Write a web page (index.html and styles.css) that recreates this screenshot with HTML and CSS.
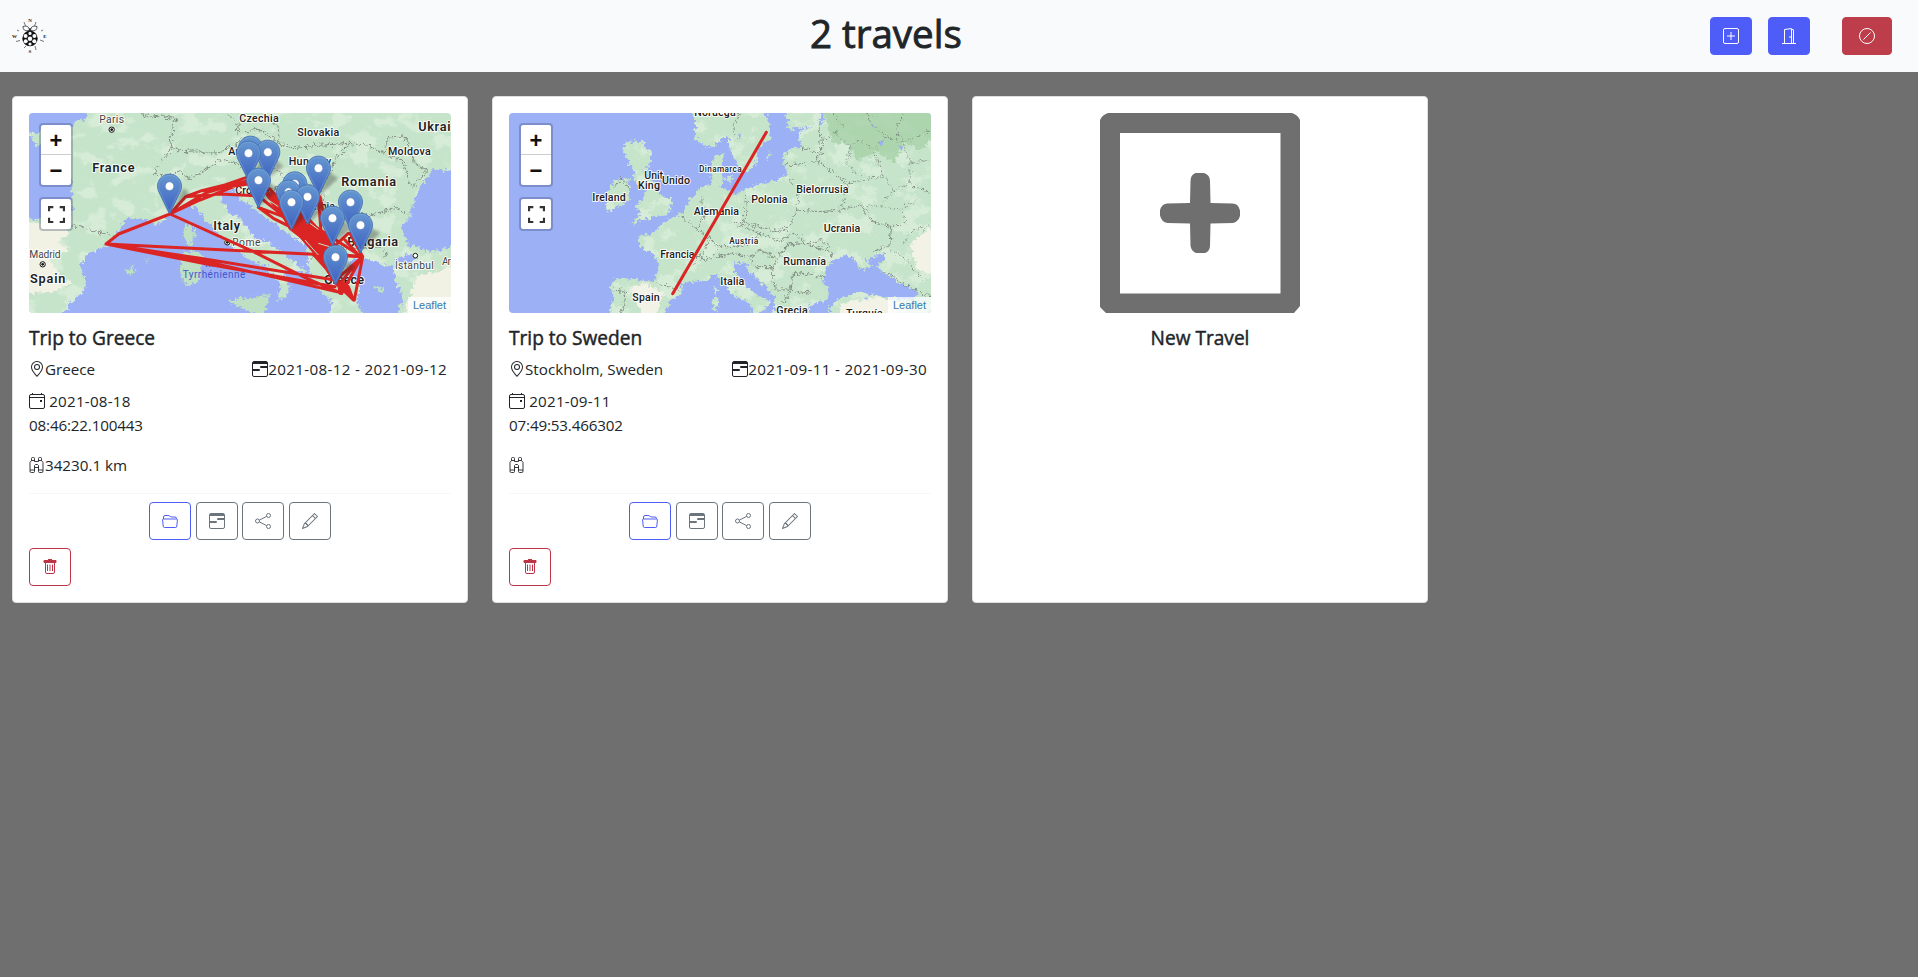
FILE: index.html
```html
<!DOCTYPE html>
<html lang="en">
<head>
<meta charset="utf-8">
<title>Travels</title>
<link rel="stylesheet" href="styles.css">
</head>
<body>
<svg class="defs" width="0" height="0" aria-hidden="true">
  <defs>
    <linearGradient id="pinFill" x1="0" y1="0" x2="0" y2="1"><stop offset="0" stop-color="#6597d0"/><stop offset="1" stop-color="#3c5fc0"/></linearGradient>
    <filter id="coast" x="-5%" y="-5%" width="110%" height="110%"><feTurbulence type="fractalNoise" baseFrequency="0.09" numOctaves="3" seed="4"/><feDisplacementMap in="SourceGraphic" scale="26" xChannelSelector="R" yChannelSelector="G"/></filter>
    <filter id="wood" x="0" y="0" width="100%" height="100%"><feTurbulence type="fractalNoise" baseFrequency="0.015 0.02" numOctaves="5" seed="11"/><feColorMatrix values="0 0 0 0 .67  0 0 0 0 .84  0 0 0 0 .68  9 0 0 0 -4.7"/><feComposite in2="SourceGraphic" operator="in"/></filter>
    <filter id="soft"><feGaussianBlur stdDeviation="5"/></filter>
    <symbol id="pin" viewBox="0 0 25 41" overflow="visible"><path d="M12.500.5C5.600.5.5 5.800.5 12.500c0 3.200 1.400 6 3 9.200L12.500 40.300l9-18.600c1.600-3.200 3-6 3-9.200C24.500 5.800 19.400.5 12.500.5z" fill="url(#pinFill)" stroke="#4674b2" stroke-width=".9"/><path d="M12.500 1.600C6.600 1.600 1.600 6.200 1.600 12.500c0 2.900 1.300 5.600 2.900 8.800l8 16.500 8-16.500c1.600-3.200 2.900-5.900 2.900-8.800 0-6.300-5-10.900-10.900-10.900z" fill="none" stroke="#8fb5e0" stroke-opacity=".4" stroke-width=".9"/><circle cx="12.500" cy="12.500" r="4.300" fill="#fff" stroke="#3a66b0" stroke-width=".5"/></symbol>
    <symbol id="geo" viewBox="0 0 16 16"><path d="M12.166 8.940c-.524 1.062-1.234 2.120-1.960 3.070A31.493 31.493 0 0 1 8 14.580a31.481 31.481 0 0 1-2.206-2.570c-.726-.950-1.436-2.008-1.960-3.070C3.304 7.867 3 6.862 3 6a5 5 0 0 1 10 0c0 .862-.305 1.867-.834 2.940zM8 16s6-5.686 6-10A6 6 0 0 0 2 6c0 4.314 6 10 6 10z"/><path d="M8 8a2 2 0 1 1 0-4 2 2 0 0 1 0 4zm0 1a3 3 0 1 0 0-6 3 3 0 0 0 0 6z"/></symbol>
    <symbol id="range" viewBox="0 0 16 16"><path fill="none" stroke="currentColor" d="M2 .5h12A1.500 1.500 0 0 1 15.500 2v12a1.500 1.500 0 0 1-1.500 1.500H2A1.500 1.500 0 0 1 .5 14V2A1.500 1.500 0 0 1 2 .5z"/><path d="M1 1h14v2H1zM15 5v2H9a1 1 0 0 1 0-2zM1 8h6a1 1 0 0 1 0 2H1z"/></symbol>
    <symbol id="event" viewBox="0 0 16 16"><path fill="none" stroke="currentColor" d="M2 1.500h12A1.500 1.500 0 0 1 15.500 3v11a1.500 1.500 0 0 1-1.500 1.500H2A1.500 1.500 0 0 1 .5 14V3A1.500 1.500 0 0 1 2 1.500zM.5 4.500h15M3.500 0v2M12.500 0v2"/><path d="M11 7h2v2h-2z"/></symbol>
    <symbol id="binoculars" viewBox="0 0 16 16"><path fill="none" stroke="currentColor" stroke-width=".9" d="M2.500 3.500v-2a1 1 0 0 1 1-1h1a1 1 0 0 1 1 1v3h4v-3a1 1 0 0 1 1-1h1a1 1 0 0 1 1 1v2M2.500 3.500h3M9.500 3.500h3M2.500 3.500L1 5.500v8.500a1.300 1.300 0 0 0 1.300 1.500h2.200a1 1 0 0 0 1-1V10M9.500 10v4.500a1 1 0 0 0 1 1h2.200A1.300 1.300 0 0 0 14 14V5.500L12.500 3.500M1 13h4.500M9.500 13H14M5.500 10.500V8.500L6.500 7.500h2l1 1v2M5.500 10.500h4"/></symbol>
    <symbol id="folder" viewBox="0 0 16 16"><path fill="none" stroke="currentColor" d="M1.500 6V4a1.500 1.500 0 0 1 1.500-1.500h3c1.800 0 2 1.500 4 1.500h3a1.500 1.500 0 0 1 1.500 1.500V6M1.500 6h13a.9.9 0 0 1 .9 1l-.6 6a1.500 1.500 0 0 1-1.500 1.500H2.700A1.500 1.500 0 0 1 1.200 13L.6 7a.9.9 0 0 1 .9-1z"/></symbol>
    <symbol id="share" viewBox="0 0 16 16"><g fill="none" stroke="currentColor"><circle cx="13.500" cy="2.500" r="2"/><circle cx="2.500" cy="8" r="2"/><circle cx="13.500" cy="13.500" r="2"/><path d="M4.300 7.100l7.400-3.700M4.300 8.900l7.400 3.700"/></g></symbol>
    <symbol id="pencil" viewBox="0 0 16 16"><path d="M12.146.146a.5.5 0 0 1 .708 0l3 3a.5.5 0 0 1 0 .708l-10 10a.5.5 0 0 1-.168.110l-5 2a.5.5 0 0 1-.650-.650l2-5a.5.5 0 0 1 .110-.168l10-10zM11.207 2.500 13.500 4.793 14.793 3.500 12.500 1.207 11.207 2.500zm1.586 3L10.500 3.207 4 9.707V10h.5a.5.5 0 0 1 .5.500v.5h.5a.5.5 0 0 1 .5.500v.5h.293l6.500-6.500zm-9.761 5.175-.106.106-1.528 3.821 3.821-1.528.106-.106A.5.5 0 0 1 5 12.500V12h-.5a.5.5 0 0 1-.5-.500V11h-.5a.5.5 0 0 1-.468-.325z"/></symbol>
    <symbol id="trash" viewBox="0 0 16 16"><path d="M6 0h4v1h3.500a1 1 0 0 1 1 1v1a1 1 0 0 1-1 1h-11a1 1 0 0 1-1-1V2a1 1 0 0 1 1-1H6z"/><path fill="none" stroke="currentColor" d="M3.500 4v9A1.500 1.500 0 0 0 5 14.500h6a1.500 1.500 0 0 0 1.500-1.500V4M5.500 5.500V12M8 5.500V12M10.500 5.500V12"/></symbol>
  </defs>
</svg>

<header class="navbar">
  <svg class="logo" viewBox="0 0 36 36" aria-label="Compass">
    <circle cx="18" cy="20.500" r="7.700" fill="#111"/><path d="M15 13l3-3 3 3z" fill="#111"/>
    <g fill="#f8fafc"><circle cx="18" cy="20.800" r="2.200"/><circle cx="18" cy="15.400" r="1.600"/><circle cx="18" cy="26" r="1.600"/><circle cx="13.600" cy="18" r="2"/><circle cx="22.400" cy="18" r="2"/><circle cx="13.700" cy="23.200" r="2"/><circle cx="22.300" cy="23.200" r="2"/></g>
    <path d="M17.500 12.500c-5 1-6.500-1-6.500-4 4-1 6 0 6.500 4zM18.500 12.500c5 1 6.500-1 6.500-4-4-1-6 0-6.500 4z" fill="#f8fafc" stroke="#222" stroke-width=".8"/>
    <g stroke="#555" stroke-width=".8"><path d="M12 4l1.500 4M24 4l-1.500 4M5 12l2 1M29 13l2-1M4 23.500l4-1M28 22l4 1.500M12 30l2-2M23 28l1 4"/></g>
    <g class="logo-text"><text x="18" y="4">N</text><text x="18" y="35">S</text><text x="2.500" y="19.500">W</text><text x="33" y="19.500">E</text></g>
  </svg>
  <h1 class="page-title">2 travels</h1>
  <nav class="actions">
    <button class="btn primary" aria-label="New travel"><svg class="icon" viewBox="0 0 16 16"><g fill="none" stroke="currentColor"><rect x=".5" y=".5" width="15" height="15" rx="1.500"/><path d="M8 4v8M4 8h8"/></g></svg></button>
    <button class="btn primary" aria-label="Log out"><svg class="icon" viewBox="0 0 16 16"><path fill="none" stroke="currentColor" d="M1 15.500h14M3.500 15.500V1.500L10.500.6v14.900M10.500 1.500h1.500a.5.500 0 0 1 .5.500v13.500"/><path d="M8.500 8h1v2h-1z"/></svg></button>
    <button class="btn danger wide" aria-label="Delete account"><svg class="icon" viewBox="0 0 16 16"><g fill="none" stroke="currentColor"><circle cx="8" cy="8" r="7.500"/><path d="M4.500 11.500l7-7"/></g></svg></button>
  </nav>
</header>

<main class="cards">
  <article class="card">
    <div class="map">
      <svg class="tiles" viewBox="27 39 1266 600" width="422" height="200">
        <rect x="27" y="39" width="1266" height="600" fill="#c6e4c9"/>
        <rect x="27" y="39" width="1266" height="600" filter="url(#wood)"/>
        <path filter="url(#coast)" fill="#f1f1e4" d="M20 365L130 380 150 400 110 430 150 450 90 480 120 530 160 550 100 575 20 580zM1190 530L1300 500V650H1150z"/>
        <g filter="url(#coast)" fill="#9cb0f6">
          <path d="M10 20H215L190 62 165 58 160 85 75 75 65 100 30 98 40 130 75 140 130 170 155 240 155 345 110 360 10 355z"/>
          <path d="M290 405L320 355 375 360 410 375 455 340 490 315 530 320 550 355 590 400 630 435 690 480 740 500 760 530 785 555 770 600 800 590 810 560 790 525 800 500 840 520 860 515 810 475 750 430 700 410 665 360 630 340 605 305 608 275 650 268 660 300 700 325 750 360 800 400 860 435 870 520 900 570 935 600 930 660H120L150 610 200 560 180 500 200 465 255 440z"/>
          <path d="M1000 475L1060 480 1090 495 1120 500 1125 540 1150 590 1130 660H1040L1010 610 1020 560 990 530 985 495z"/>
          <path d="M1145 380L1170 350 1180 310 1200 260 1240 205 1300 215V440L1230 455 1160 430z"/><path d="M1120 480L1160 462 1190 475 1170 495z"/>
        </g>
        <g filter="url(#coast)" fill="#bfe0c2"><path d="M512 360L525 400 510 440 490 415 495 385zM482 465L520 450 550 470 535 545 500 560 485 535zM625 602L700 590 750 585 730 645H700zM315 510L340 500 345 515 330 525zM370 480L385 478 380 488zM1060 560L1090 560 1085 580z"/></g>
        <g class="border"><path d="M130 375L180 380 220 393 282 408M360 40L385 47 465 55 450 115 457 145 490 155 530 152 560 160 600 158 650 130 700 85 735 95 775 130 815 143 880 137 985 130 1040 135 1090 160 1110 110 1150 110 1175 150 1180 190 1222 210 1175 265 1160 225 1150 185 1090 160M457 145L430 175 400 220 440 228 480 215 500 240 540 220 600 180 640 185 660 200M735 40L770 75 780 110M620 40L655 75 650 110M780 110L765 160 760 200 800 240 870 250 905 265 910 300 960 330 1050 345 1130 325 1165 345M985 130L950 175 905 265M660 240L720 255 760 265 830 270M760 265L755 310 800 345 850 380M870 400L910 390 940 430 1000 445 1090 440 1100 470M870 480L900 440"/></g>
        <g class="map-label">
          <text x="275" y="68" textLength="74" class="city">Paris</text><text x="717" y="66" textLength="118">Czechia</text><text x="895" y="107" textLength="126">Slovakia</text><text x="1243" y="93" textLength="97" class="big">Ukrai</text><text x="1168" y="164" textLength="128">Moldova</text><text x="280" y="216" textLength="127" class="big">France</text><text x="625" y="165" class="start">Austria</text><text x="870" y="194" textLength="128">Hungary</text><text x="1046" y="258" textLength="165" class="big">Romania</text><text x="646" y="283" class="start">Croatia</text><text x="620" y="390" textLength="80" class="big">Italy</text><text x="679" y="437" textLength="85" class="city">Rome</text><text x="900" y="330" textLength="90">Serbia</text><text x="1058" y="438" textLength="153" class="big">Bulgaria</text><text x="75" y="475" textLength="94" class="city">Madrid</text><text x="83" y="548" textLength="106" class="big">Spain</text><text x="1183" y="506" textLength="116" class="city">İstanbul</text><text x="1266" y="496" textLength="27" class="city start">Ar</text><text x="972" y="551" textLength="120" class="big">Greece</text>
        </g>
        <g class="sea-label"><text x="582" y="502">Mer</text><text x="582" y="535" textLength="188">Tyrrhénienne</text></g>
        <g fill="#fff" stroke="#111" stroke-width="3"><circle cx="275" cy="89" r="8"/><circle cx="68" cy="493" r="8"/><circle cx="622" cy="427" r="8"/><circle cx="1186" cy="467" r="7"/></g><g fill="#111"><circle cx="275" cy="89" r="4"/><circle cx="68" cy="493" r="4"/><circle cx="622" cy="427" r="4"/></g>
        <g class="track">
          <path d="M258 432L296 402 450 342 497 290 545 272 615 255 680 232M450 342L540 300 680 245M450 342L560 278 690 240M497 290L600 282 720 288M545 272L700 250M450 342L700 455 860 535 965 580M258 432L880 463 1028 470M258 432L540 475 945 540M258 432L560 492 945 560M258 432L560 485 965 578"/>
          <path d="M690 240L745 265 820 330 900 390 940 430M715 322L790 350 830 390 905 480 947 550M715 322L760 355 820 385 870 440 920 490M750 268L790 310 850 340 915 410 940 450M740 280L850 370 930 470M760 290L810 385 900 455M730 300L850 395 940 540M895 290L905 420 880 463M900 290L912 350 940 430M870 370L1025 470M940 430L960 580M985 400L920 460 1028 470 1003 600 960 550 1025 470 965 580 945 530 1003 600M1028 470L1003 600 947 550M880 463L1003 600M1020 470L975 420M990 400L1028 470 947 540"/>
          <path d="M735 275L780 340 830 395 890 465 925 500 940 470 940 430 860 365 790 295zM965 545L985 560 1000 600 975 575z" fill="#db2424"/>
        </g>
        <g class="label-gap"><path d="M745 300l30 20M855 420l40 45M870 370l25 18M895 430l40 12"/></g>
        <g fill="#222" opacity=".32" filter="url(#soft)"><path d="M450 342L510 280 490 265zM687 240L755 180 730 165zM743 235L790 200 770 180zM715 322L775 270 745 245zM895 290L955 235 925 215zM862 373L925 315 890 300zM814 388L875 335 845 315zM937 436L1000 380 965 360zM1021 457L1080 400 1050 380zM946 553L1008 500 975 480z"/></g>
        <g><use href="#pin" x="654" y="107" width="75" height="123"/><use href="#pin" x="706" y="119" width="75" height="123"/><use href="#pin" x="648" y="122" width="75" height="123"/><use href="#pin" x="858" y="167" width="75" height="123"/><use href="#pin" x="678" y="203" width="75" height="123"/><use href="#pin" x="787" y="214" width="75" height="123"/><use href="#pin" x="411" y="221" width="75" height="123"/><use href="#pin" x="768" y="239" width="75" height="123"/><use href="#pin" x="825" y="253" width="75" height="123"/><use href="#pin" x="777" y="269" width="75" height="123"/><use href="#pin" x="954" y="269" width="75" height="123"/><use href="#pin" x="900" y="317" width="75" height="123"/><use href="#pin" x="984" y="338" width="75" height="123"/><use href="#pin" x="909" y="434" width="75" height="123"/></g>
      </svg>
      <div class="controls"><div class="control"><span>+</span><span>−</span></div><div class="control"><svg class="full" viewBox="0 0 16 16"><path d="M1 5V1h4M11 1h4v4M15 11v4h-4M5 15H1v-4"/></svg></div></div>
      <a class="credit">Leaflet</a>
    </div>
    <h2 class="card-title">Trip to Greece</h2>
    <div class="facts"><span class="fact"><svg class="icon"><use href="#geo"/></svg>Greece</span><span class="fact dates"><svg class="icon"><use href="#range"/></svg>2021-08-12 - 2021-09-12</span></div>
    <p class="created"><svg class="icon"><use href="#event"/></svg> 2021-08-18<br><span class="time">08:46:22.100443</span></p>
    <p class="fact distance"><svg class="icon"><use href="#binoculars"/></svg>34230.1 km</p>
    <hr class="rule">
    <div class="tools"><button class="btn outline-primary" aria-label="Open"><svg class="icon"><use href="#folder"/></svg></button><button class="btn outline" aria-label="Dates"><svg class="icon"><use href="#range"/></svg></button><button class="btn outline" aria-label="Share"><svg class="icon"><use href="#share"/></svg></button><button class="btn outline" aria-label="Edit"><svg class="icon"><use href="#pencil"/></svg></button></div>
    <button class="btn outline-danger" aria-label="Delete"><svg class="icon"><use href="#trash"/></svg></button>
  </article>

  <article class="card">
    <div class="map">
      <svg class="tiles" viewBox="27 39 1266 600" width="422" height="200">
        <defs><path id="europe" d="M1310 20H965L975 50 960 75 900 92 893 115 910 140 870 145 850 165 858 225 830 240 800 245 740 265 705 285 690 270 660 262 672 240 665 215 672 160 650 165 634 190 635 250 600 265 572 295 545 340 500 360 465 395 410 410 420 440 465 465 475 500 465 545 345 535 332 560 340 590 325 660H480L510 605 545 575 545 550 575 545 605 545 645 525 665 545 700 585 750 610 765 660 800 620 810 605 760 580 705 515 705 490 737 488 745 510 790 555 825 590 820 660H930L925 615 980 600 985 570 965 545 990 490 1030 465 1065 475 1080 510 1120 500 1095 480 1150 458 1155 475 1130 500 1190 545 1255 575 1240 600 1150 590 1080 575 1010 600 990 620 990 660H1310zM570 20L585 60 585 115 620 145 650 130 685 105 690 150 710 190 735 220 765 195 775 145 812 115 805 60 785 20zM860 50L870 90 955 78 965 20H850zM370 150L375 125 440 125 430 150 457 155 445 200 430 215 460 240 480 285 517 300 505 345 440 355 393 373 425 335 405 325 425 300 440 270 405 245 400 215zM345 240L385 232 388 300 330 335 315 325 330 260zM640 562L652 562 648 590zM637 595L655 595 650 635 637 630zM800 175L810 155 812 170zM675 230L700 225 690 255z"/></defs>
        <rect x="27" y="39" width="1266" height="600" fill="#9cb0f6"/>
        <g filter="url(#coast)"><use href="#europe" fill="#c6e4c9"/><use href="#europe" filter="url(#wood)"/></g>
        <path filter="url(#coast)" fill="#a5d1a8" opacity=".8" d="M970 20H1310V100L1260 150 1210 130 1180 190 1130 155 1070 180 1040 130 1000 130 985 90z"/>
        <path filter="url(#coast)" fill="#f2f2e6" d="M385 570L430 550 490 575 470 645H430L410 610zM1230 430L1310 370V520L1250 510zM1020 610L1140 590 1230 620 1180 655H1020z"/>
        <g fill="#9cb0f6"><path d="M1135 128l18-10-8 22zM1195 135l14 5-4 14zM715 105l8-5-3 20zM1115 70l12 15-14-8zM1062 520l15-8 10 12zM1090 595l10-3 2 8z"/></g>
        <g class="border"><path d="M720 39L700 80 710 110M850 195L900 192 950 185 965 150 960 85M905 145L960 160M865 235L895 270 890 330 870 380 840 395 780 380 735 370 740 280M950 185L1000 215 1045 250 1025 330 960 335 890 330M1025 330L1080 315 1120 365 1175 380 1170 435 1120 455M605 290L610 350 590 390 545 350M590 390L630 410 615 450 580 490M630 410L650 440 700 440 750 430 780 400 700 370 735 370M780 400L840 425 880 400 920 430 970 420 1000 470M470 550L540 570M340 570L380 575 365 639M600 480L650 470 700 460 750 470 780 450 830 475 860 435 920 430M750 470L760 500 820 500 815 540 830 570M860 435L840 470 820 500M880 520L975 530M880 520L870 570 930 580M830 570L870 570 850 610M920 430L975 450 1000 470M345 260l20-25 15 20M1150 510L1220 560 1293 590"/><path stroke-dasharray="7 6" d="M970 120L1010 100 1050 140 1080 120 1120 150 1160 110 1210 130 1290 90M1000 39L1030 80 1000 100M1100 39L1120 80 1160 110M1210 39L1190 90 1210 130M1050 140L1040 190 1090 240 1045 250M1090 240L1150 230 1180 270 1140 320 1080 315M1180 270L1230 250 1290 280M1120 150L1140 200 1150 230M1210 130L1230 190 1230 250M1230 190L1290 180M1140 320L1200 330 1250 300M1175 380L1220 370 1200 330M1210 430L1240 390 1290 380M1170 450L1220 480 1270 540"/></g>
        <g class="map-label light">
          <text x="645" y="49" textLength="124">Noruega</text><text x="661" y="216" textLength="128" class="small">Dinamarca</text><text x="461" y="236" textLength="56">Unit</text><text x="447" y="266" textLength="66">King</text><text x="528" y="251" textLength="84">Unido</text><text x="327" y="303" textLength="100">Ireland</text><text x="649" y="344" textLength="136">Alemania</text><text x="808" y="308" textLength="109">Polonia</text><text x="967" y="278" textLength="157">Bielorrusia</text><text x="1026" y="395" textLength="110">Ucrania</text><text x="731" y="432" textLength="87" class="small">Austria</text><text x="532" y="475" textLength="103">Francia</text><text x="914" y="494" textLength="128">Rumanía</text><text x="697" y="555" textLength="72">Italia</text><text x="438" y="602" textLength="82">Spain</text><text x="876" y="641" textLength="94">Grecia</text><text x="1093" y="651" textLength="110">Turquía</text>
        </g>
        <path class="track" d="M518 581L799 97"/>
      </svg>
      <div class="controls"><div class="control"><span>+</span><span>−</span></div><div class="control"><svg class="full" viewBox="0 0 16 16"><path d="M1 5V1h4M11 1h4v4M15 11v4h-4M5 15H1v-4"/></svg></div></div>
      <a class="credit">Leaflet</a>
    </div>
    <h2 class="card-title">Trip to Sweden</h2>
    <div class="facts"><span class="fact"><svg class="icon"><use href="#geo"/></svg>Stockholm, Sweden</span><span class="fact dates"><svg class="icon"><use href="#range"/></svg>2021-09-11 - 2021-09-30</span></div>
    <p class="created"><svg class="icon"><use href="#event"/></svg> 2021-09-11<br><span class="time">07:49:53.466302</span></p>
    <p class="fact distance"><svg class="icon"><use href="#binoculars"/></svg></p>
    <hr class="rule">
    <div class="tools"><button class="btn outline-primary" aria-label="Open"><svg class="icon"><use href="#folder"/></svg></button><button class="btn outline" aria-label="Dates"><svg class="icon"><use href="#range"/></svg></button><button class="btn outline" aria-label="Share"><svg class="icon"><use href="#share"/></svg></button><button class="btn outline" aria-label="Edit"><svg class="icon"><use href="#pencil"/></svg></button></div>
    <button class="btn outline-danger" aria-label="Delete"><svg class="icon"><use href="#trash"/></svg></button>
  </article>

  <article class="card new">
    <svg class="plus" viewBox="0 0 200 200"><path fill-rule="evenodd" d="M8 0H192Q198 2 200 7V193L194 200H6L0 194V7Q2 2 8 0zM20 20V180.500H180.500V20z"/><path d="M96 60h8q6 2 6 8l.5 22 22 .5q6 0 7.500 7v5q-1 6-7 7.500l-22.500.5-.5 22q0 6-5 7.500h-9q-5-2-5.500-7.500l-.5-22-22.500-.5q-6-1-7.500-7.500v-5q1-6 7-7l23-.5.5-22q0-6 5-8z"/></svg>
    <h2 class="card-title">New Travel</h2>
  </article>
</main>
</body>
</html>
```
FILE: styles.css
```css
* { box-sizing: border-box; }
body { margin: 0; min-height: 977px; background: #6f6f6f; color: #212529; font: 15.2px/24px "Open Sans", "Noto Sans", sans-serif; }
.defs { position: absolute; }
.navbar { display: grid; grid-template-columns: 798px auto 1fr; align-items: center; height: 72px; padding: 0 26px 0 12px; background: #f8fafc; }
.logo { width: 36px; height: 36px; overflow: visible; }
.logo-text { font: bold 5px "Liberation Serif", serif; text-anchor: middle; fill: #222; }
.page-title { margin: 0; padding-bottom: 6px; font-size: 38.5px; line-height: 48px; font-weight: 400; -webkit-text-stroke: .9px currentColor; }
.actions { display: flex; justify-content: flex-end; gap: 16px; }
.btn { display: inline-flex; align-items: center; justify-content: center; width: 42px; height: 38px; padding: 0; border: 1px solid; border-radius: 4px; background: none; }
.primary { color: #fff; background: #4e5df8; border-color: #4e5df8; }
.danger { color: #fff; background: #bd3d4a; border-color: #bd3d4a; }
.wide { width: 50px; margin-left: 16px; }
.outline-primary { color: #4e5df8; }
.outline { color: #6c757d; }
.outline-danger { color: #bd3447; }
.icon { width: 16px; height: 16px; fill: currentColor; flex: none; }
.cards { display: grid; grid-template-columns: repeat(3, 456px); gap: 24px; padding: 24px 12px; }
.card { height: 507px; padding: 16px; background: #fff; border: 1px solid #dfdfdf; border-radius: 4px; }
.map { position: relative; width: 422px; height: 200px; overflow: hidden; border-radius: 4px; }
.tiles { display: block; }
.map-label, .sea-label { font: 500 32px Roboto, sans-serif; text-anchor: middle; fill: #202020; stroke: #fff; stroke-opacity: .85; stroke-width: 6px; paint-order: stroke; stroke-linejoin: round; }
.map-label .big { font-size: 38px; font-weight: 600; }
.map-label .city { font-size: 31px; font-weight: 400; fill: #444; }
.map-label .small { font-size: 25px; }
.map-label .start { text-anchor: start; }
.sea-label { font-size: 30px; font-weight: 400; fill: #4356cf; stroke: none; }
.border { fill: none; stroke: #737d76; stroke-width: 2.5; stroke-linejoin: round; filter: url(#coast); }
.track { fill: none; stroke: #db2424; stroke-width: 9; stroke-linejoin: round; stroke-linecap: round; }
.label-gap { fill: none; stroke: #c6e4c9; stroke-width: 3; }
.controls { position: absolute; top: 10px; left: 10px; display: grid; gap: 10px; }
.control { width: 34px; border: 2px solid rgba(60, 70, 110, .32); border-radius: 4px; background: #fff; background-clip: padding-box; color: #111; display: grid; place-items: center; min-height: 34px; }
.control span { width: 30px; height: 30px; text-align: center; font: bold 22px/31px "Liberation Sans", sans-serif; }
.control span:first-child { border-bottom: 1px solid #ccc; }
.full { width: 17px; height: 17px; fill: none; stroke: #333; stroke-width: 2; }
.credit { position: absolute; right: 0; bottom: 0; height: 16px; padding: 0 5px; background: rgba(255, 255, 255, .72); color: #3779ad; font: 11px/16px "Liberation Sans", sans-serif; }
.card-title { margin: 13px 0 7px; font-size: 19.1px; line-height: 24px; font-weight: 400; -webkit-text-stroke: .45px currentColor; }
.facts { display: flex; justify-content: space-between; height: 24px; padding-right: 4px; margin-bottom: 8px; }
.fact { display: flex; align-items: center; }
.dates { letter-spacing: .33px; }
.created { margin: 0 0 16px; letter-spacing: .22px; }
.created .time { letter-spacing: -.16px; }
.created .icon { vertical-align: -2px; }
.distance { margin: 0; height: 24px; }
.rule { margin: 16px 0 8px; height: 1px; border: 0; background: #f7f7f7; }
.tools { display: flex; justify-content: center; gap: 4.666px; height: 38px; margin-bottom: 8px; }
.new { text-align: center; }
.plus { display: block; width: 200px; height: 200px; margin: 0 auto; fill: #6f6f6f; }
```
